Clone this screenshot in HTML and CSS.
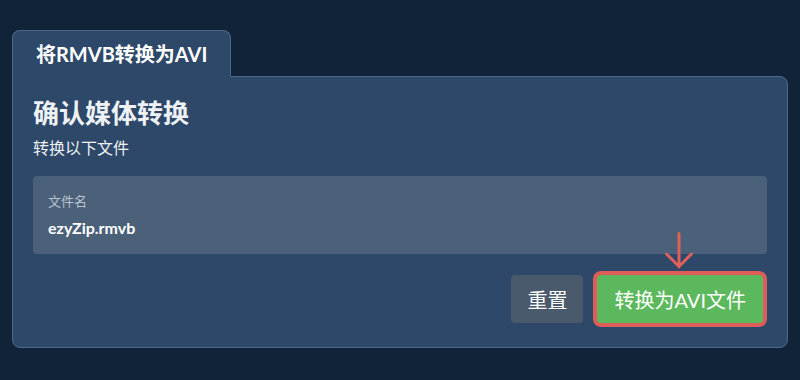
FILE: index.html
```html
<!DOCTYPE html>
<html lang="zh">
<head>
<meta charset="utf-8">
<link rel="stylesheet" href="styles.css">
</head>
<body>
<div class="wrap">
  <div class="tab">将RMVB转换为AVI</div>
  <div class="panel">
    <h1 class="title">确认媒体转换</h1>
    <p class="sub">转换以下文件</p>
    <div class="field">
      <div class="label">文件名</div>
      <div class="value">ezyZip.rmvb</div>
    </div>
    <div class="actions">
      <button class="btn reset">重置</button>
      <div class="go-wrap">
        <svg class="arrow" width="30" height="38" viewBox="0 0 30 38"><path d="M15 1.5 V35 M2.5 22 L15 34.5 L27.5 22" fill="none" stroke="#e0605a" stroke-width="3" stroke-linecap="round" stroke-linejoin="round"/></svg>
        <button class="btn go">转换为AVI文件</button>
      </div>
    </div>
  </div>
</div>
</body>
</html>
```
FILE: styles.css
```css
html, body { margin: 0; padding: 0; }
body {
  background: #112338;
  font-family: Lato, "Noto Sans CJK SC", sans-serif;
  color: #ffffff;
  width: 800px;
  height: 380px;
  overflow: hidden;
}
.wrap { padding: 30px 12px 0 12px; }
.tab {
  display: inline-block;
  box-sizing: border-box;
  height: 47px;
  padding: 0 23px;
  line-height: 46px;
  font-size: 20px;
  font-weight: 700;
  background: #2d4868;
  border: 1px solid #4d6888;
  border-bottom: none;
  border-radius: 8px 8px 0 0;
  position: relative;
  z-index: 1;
  margin-bottom: -1px;
}
.panel {
  box-sizing: border-box;
  height: 272px;
  background: #2d4868;
  border: 1px solid #4d6888;
  border-radius: 0 8px 8px 8px;
  padding: 20px 20px 0 20px;
}
.title {
  margin: 0;
  font-size: 26px;
  line-height: 32px;
  font-weight: 700;
  color: #eef1f5;
}
.sub {
  margin: 8px 0 0 0;
  font-size: 16px;
  line-height: 22px;
  color: #eef1f5;
}
.field {
  margin-top: 17px;
  height: 78px;
  box-sizing: border-box;
  background: #4b6079;
  border-radius: 4px;
  padding: 15px 15px 0 15px;
}
.label {
  font-size: 13px;
  line-height: 20px;
  color: #b9c3ce;
}
.value {
  margin-top: 6px;
  font-size: 16px;
  line-height: 22px;
  font-weight: 700;
  color: #ffffff;
}
.actions {
  display: flex;
  justify-content: flex-end;
  align-items: flex-end;
  gap: 14px;
  margin-top: 21px;
  padding-right: 4px;
}
.btn {
  height: 48px;
  border: none;
  border-radius: 4px;
  font-family: Lato, "Noto Sans CJK SC", sans-serif;
  font-size: 20px;
  color: #ffffff;
  padding: 0 16px;
  cursor: pointer;
}
.reset { background: #4a5a6c; }
.go-wrap { position: relative; }
.arrow { position: absolute; left: 67px; top: -43px; }
.go {
  display: block;
  background: #5cb85c;
  box-shadow: 0 0 0 4px #de5d58;
  padding: 0 17px;
}
```
